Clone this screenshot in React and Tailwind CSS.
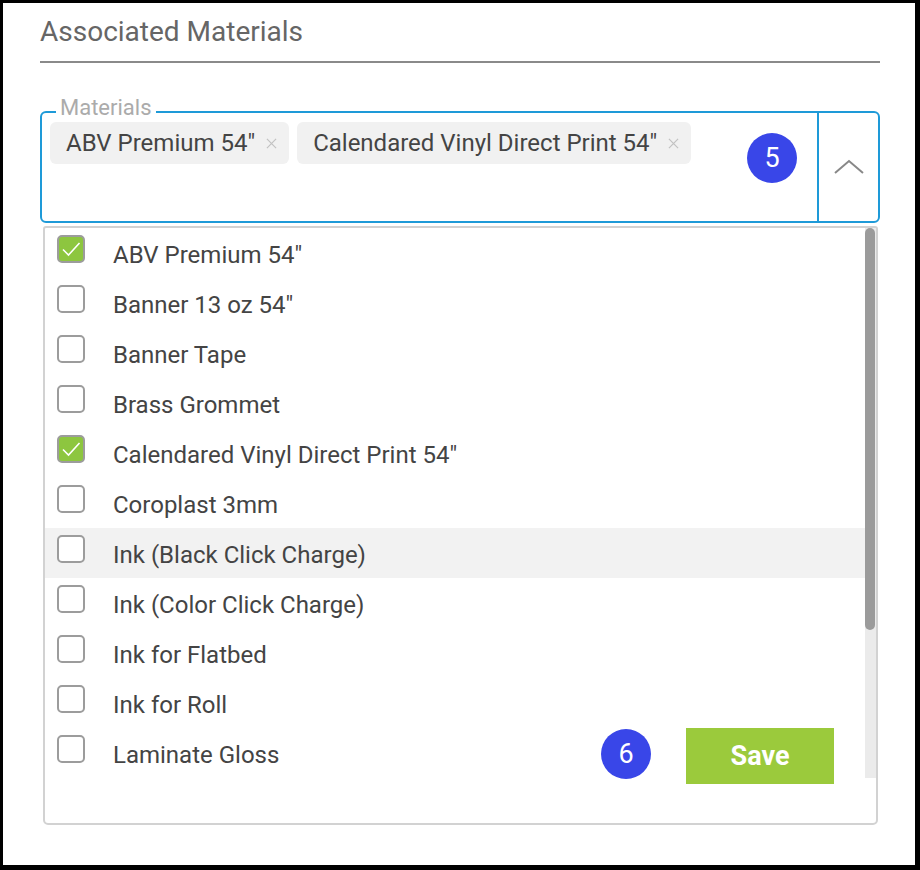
import React from 'react';

const materials = [
  { name: 'ABV Premium 54"', checked: true },
  { name: 'Banner 13 oz 54"' },
  { name: 'Banner Tape' },
  { name: 'Brass Grommet' },
  { name: 'Calendared Vinyl Direct Print 54"', checked: true },
  { name: 'Coroplast 3mm' },
  { name: 'Ink (Black Click Charge)', hover: true },
  { name: 'Ink (Color Click Charge)' },
  { name: 'Ink for Flatbed' },
  { name: 'Ink for Roll' },
  { name: 'Laminate Gloss' },
];

const chips = ['ABV Premium 54"', 'Calendared Vinyl Direct Print 54"'];

const Badge = ({ n, className }) => (
  <div
    className={`absolute w-[50px] h-[50px] rounded-full bg-[#3946e8] text-white text-[27px] flex items-center justify-center ${className}`}
  >
    {n}
  </div>
);

const Checkbox = ({ checked }) => (
  <div
    className={`w-[28px] h-[28px] shrink-0 rounded-[5px] border-2 border-[#9c9c9c] flex items-center justify-center ${
      checked ? 'bg-[#8dc63f]' : 'bg-white'
    }`}
  >
    {checked && (
      <svg width="24" height="24" viewBox="0 0 24 24" fill="none">
        <path d="M4 12.5 L9.5 18 L20.5 6" stroke="white" strokeWidth="1.6" />
      </svg>
    )}
  </div>
);

export default function App() {
  return (
    <div
      className="w-[920px] h-[870px] bg-white border-black border-t-[3px] border-l-[3px] border-r-[5px] border-b-[5px] pl-[37px] pr-[35px] pt-[12px]"
      style={{ fontFamily: 'Roboto, "Noto Sans", sans-serif' }}
    >
      <h1 className="text-[28px] leading-[34px] text-[#666666]">Associated Materials</h1>
      <div className="mt-[12px] h-[2px] bg-[#8a8a8a]" />

      {/* select field */}
      <div className="relative mt-[48px] h-[112px] border-2 border-[#1e9ad8] rounded-[6px] flex">
        <span className="absolute -top-[17px] left-[14px] px-[4px] bg-white text-[22px] leading-[24px] text-[#ababab]">
          Materials
        </span>
        <div className="flex-1 flex items-start gap-[8px] pl-[8px] pt-[9px]">
          {chips.map((c) => (
            <div
              key={c}
              className="h-[42px] rounded-[6px] bg-[#f1f1f1] flex items-center pl-[16px] pr-[12px] text-[24px] text-[#444444]"
            >
              <span>{c}</span>
              <svg className="ml-[11px]" width="11" height="11" viewBox="0 0 12 12" fill="none">
                <path d="M1 1 L11 11 M11 1 L1 11" stroke="#c2c2c2" strokeWidth="1.3" />
              </svg>
            </div>
          ))}
        </div>
        <div className="w-[61px] border-l-2 border-[#1e9ad8] flex items-center justify-center">
          <svg width="30" height="16" viewBox="0 0 30 16" fill="none">
            <path d="M1 14 L15 2 L29 14" stroke="#888888" strokeWidth="2" />
          </svg>
        </div>
        <Badge n="5" className="left-[705px] top-[20px]" />
      </div>

      {/* dropdown list */}
      <div className="relative mt-[3px] ml-[3px] mr-[2px] h-[599px] border-2 border-[#d2d2d2] rounded-b-[5px] rounded-t-[3px]">
        <div className="flex h-[550px]">
          <div className="flex-1">
            {materials.map((m) => (
              <div
                key={m.name}
                className={`h-[50px] flex items-start pl-[12px] pt-[7px] ${m.hover ? 'bg-[#f2f2f2]' : ''}`}
              >
                <Checkbox checked={m.checked} />
                <span className="ml-[28px] mt-[6px] text-[24px] leading-[28px] text-[#444444]">{m.name}</span>
              </div>
            ))}
          </div>
          <div className="w-[11px] bg-[#ebebeb]">
            <div className="h-[402px] w-[10px] rounded-full bg-[#9b9b9b]" />
          </div>
        </div>
        <Badge n="6" className="left-[556px] top-[501px]" />
        <button className="absolute left-[641px] top-[500px] w-[148px] h-[56px] bg-[#9bca3c] text-white font-bold text-[27px]">
          Save
        </button>
      </div>
    </div>
  );
}
